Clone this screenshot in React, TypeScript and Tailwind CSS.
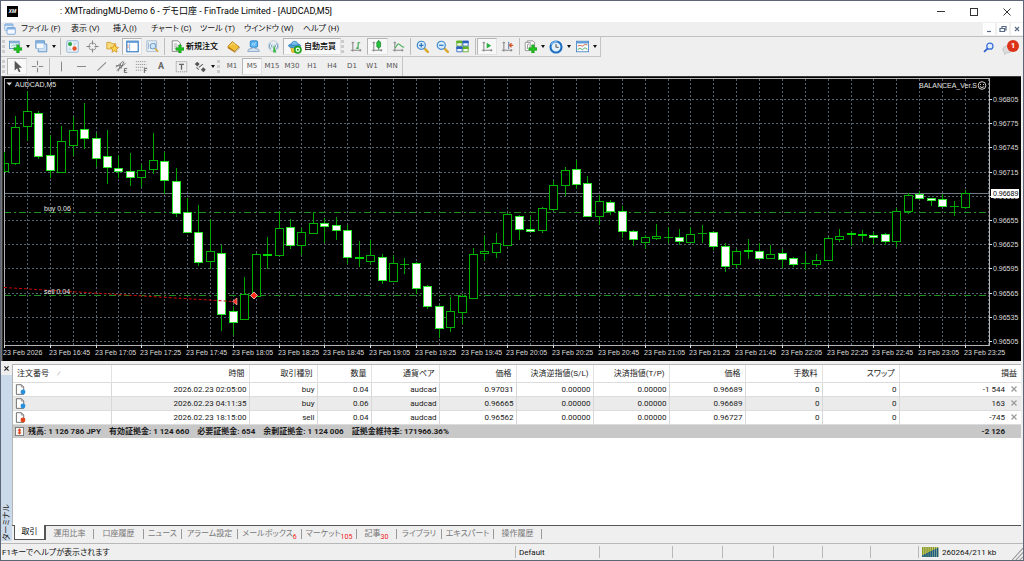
import { useState, type ReactNode } from "react";

const UI_FONT =
  "font-['Roboto','Noto_Sans_CJK_JP',sans-serif] [font-feature-settings:'palt']";

// [high, body top, body bottom, low, bearish]
type Candle = [number, number, number, number, 0 | 1];

const CANDLES: Candle[] = [
  [152, 163, 171, 171, 0], [116, 127, 163, 164, 0], [91, 111, 126, 140, 0],
  [111, 113, 156, 158, 1], [135, 155, 170, 177, 1], [126, 141, 172, 172, 0],
  [117, 130, 145, 155, 0], [103, 129, 138, 148, 1], [133, 138, 158, 166, 1],
  [130, 156, 167, 183, 1], [155, 168, 171, 177, 1], [153, 171, 177, 185, 1],
  [164, 170, 177, 186, 0], [133, 160, 169, 173, 0], [152, 161, 180, 193, 1],
  [168, 181, 213, 216, 1], [198, 212, 232, 232, 1], [205, 232, 262, 265, 1],
  [219, 251, 261, 268, 0], [245, 253, 314, 330, 1], [306, 311, 322, 334, 1],
  [277, 294, 319, 319, 0], [253, 254, 296, 296, 0], [237, 254, 255, 268, 1],
  [211, 228, 255, 255, 0], [219, 227, 245, 248, 1], [228, 232, 245, 254, 0],
  [212, 223, 233, 233, 0], [218, 223, 226, 242, 1], [217, 225, 230, 239, 1],
  [225, 230, 257, 263, 1], [241, 257, 258, 266, 1], [240, 255, 261, 264, 0],
  [254, 257, 280, 283, 1], [255, 263, 281, 281, 0], [258, 264, 264, 273, 0],
  [262, 263, 288, 293, 1], [285, 286, 306, 308, 1], [305, 306, 328, 337, 1],
  [297, 311, 327, 331, 0], [294, 296, 312, 323, 0], [248, 254, 298, 298, 0],
  [236, 251, 253, 260, 0], [233, 243, 252, 257, 0], [213, 214, 245, 245, 0],
  [215, 216, 229, 239, 1], [216, 229, 231, 231, 1], [207, 208, 230, 232, 0],
  [181, 185, 209, 210, 0], [167, 170, 185, 195, 0], [160, 169, 184, 188, 1],
  [176, 183, 216, 216, 1], [195, 201, 216, 224, 0], [200, 202, 211, 214, 1],
  [206, 211, 231, 237, 1], [230, 231, 239, 245, 1], [235, 237, 242, 248, 0],
  [224, 236, 238, 239, 0], [227, 237, 237, 242, 0], [229, 237, 241, 244, 1],
  [227, 234, 242, 242, 0], [225, 233, 233, 242, 0], [231, 232, 246, 249, 1],
  [243, 246, 266, 271, 1], [249, 251, 264, 267, 0], [239, 250, 251, 258, 1],
  [243, 251, 258, 259, 1], [245, 254, 258, 258, 0], [249, 253, 259, 267, 1],
  [257, 258, 264, 266, 1], [253, 263, 263, 269, 0], [254, 260, 264, 266, 0],
  [237, 238, 260, 260, 0], [229, 236, 239, 241, 0], [231, 233, 234, 245, 1],
  [230, 234, 235, 241, 1], [232, 235, 237, 243, 1], [233, 234, 241, 244, 1],
  [208, 211, 241, 246, 0], [193, 195, 211, 213, 0], [191, 194, 198, 199, 1],
  [198, 198, 200, 205, 1], [194, 199, 206, 206, 1], [201, 206, 206, 215, 0],
  [190, 193, 207, 208, 0],
];

const PRICES = [
  "0.96805", "0.96775", "0.96745", "0.96715", "0.96685", "0.96655",
  "0.96625", "0.96595", "0.96565", "0.96535", "0.96505",
];

const candleX = (i: number) => Math.round(4 + i * 11.44);
const priceY = (i: number) => Math.round(99 + i * 24.2);

function timeLabel(i: number) {
  if (i === 0) return "23 Feb 2026";
  const minutes = 16 * 60 + 45 + (i - 1) * 20;
  const hh = Math.floor(minutes / 60);
  const mm = String(minutes % 60).padStart(2, "0");
  return `23 Feb ${hh}:${mm}`;
}

function Chart() {
  return (
    <svg
      viewBox="1 76 1020 285"
      className="block h-auto w-full bg-black font-['Liberation_Sans',sans-serif] text-[7px]"
      role="img"
      aria-label="AUDCAD,M5"
    >
      <rect x="1" y="76" width="1020" height="1" fill="#3a3a3a" />
      <rect x="1" y="76" width="1" height="285" fill="#777" />
      <rect x="2" y="76" width="1" height="285" fill="#333" />

      <g stroke="#56646f" strokeDasharray="2 2" shapeRendering="crispEdges">
        {PRICES.map((p, i) => (
          <line key={p} x1="4" x2="989" y1={priceY(i) + 0.5} y2={priceY(i) + 0.5} />
        ))}
        {Array.from({ length: 43 }, (_, i) => (
          <line
            key={i}
            x1={candleX((i + 1) * 2) + 0.5}
            x2={candleX((i + 1) * 2) + 0.5}
            y1="79"
            y2="345"
          />
        ))}
      </g>

      <g shapeRendering="crispEdges">
        <path d="M4 193.5H989" stroke="#6b7a84" />
        <path d="M4 212.5H989M4 295.5H989" stroke="#1f8f1f" strokeDasharray="7 3 2 3" />
        <path d="M4.5 345V78.5H989.5V345.5H4" stroke="#b4b4b4" fill="none" />
      </g>

      <g shapeRendering="crispEdges">
        {CANDLES.map(([high, top, bottom, low, bear], i) => {
          const x = candleX(i);
          const left = i === 0 ? x : x - 4;
          const width = i === 0 ? 4 : 8;
          return (
            <g key={i}>
              <path d={`M${x + 0.5} ${high}V${low + 1}`} stroke="#00a400" />
              {bottom - top < 2 ? (
                <rect
                  x={left}
                  y={top}
                  width={width + 1}
                  height={bottom - top + 1}
                  fill={bear ? "#00d800" : "#00a400"}
                />
              ) : (
                <rect
                  x={left + 0.5}
                  y={top + 0.5}
                  width={width}
                  height={bottom - top}
                  fill={bear ? "#fff" : "#000"}
                  stroke={bear ? "#2be62b" : "#00b000"}
                />
              )}
            </g>
          );
        })}
      </g>

      <path d="M4 287.5L233 301.5" stroke="#c80000" strokeDasharray="3 2" />
      <path d="M237 298v7l-4.500-3.500z" fill="#ff2a1c" stroke="#f3c9c4" strokeWidth=".6" />
      <path d="M254 292l3.500 3.500-3.500 3.500-3.500-3.500z" fill="#ff2a1c" stroke="#f3c9c4" strokeWidth=".8" />

      <g fill="#e4e4e4">
        <path d="M6.500 82.500h5.500l-2.750 3z" />
        <text x="15" y="87">AUDCAD,M5</text>
        <text x="977" y="88" textAnchor="end">BALANCEA_Ver.S</text>
        <text x="44" y="211">buy 0.06</text>
        <text x="44" y="294">sell 0.04</text>
      </g>
      <g stroke="#e4e4e4" fill="none" strokeWidth=".9">
        <circle cx="982" cy="85.500" r="3.800" />
        <path d="M980.500 84v1M983.500 84v1M979.800 86.500q2.200 2.300 4.400 0" />
      </g>

      <g fill="#dcdcdc">
        {PRICES.map((p, i) => (
          <g key={p}>
            <rect x="989" y={priceY(i)} width="3" height="1" />
            <text x="993" y={priceY(i) + 3}>{p}</text>
          </g>
        ))}
        {Array.from({ length: 22 }, (_, i) => (
          <g key={i}>
            <rect x={candleX(i * 4)} y="345" width="1" height="3" />
            <text x={candleX(i * 4) - 1} y="355">{timeLabel(i)}</text>
          </g>
        ))}
      </g>
      <rect x="991" y="189" width="28" height="9" fill="#fff" />
      <text x="993" y="196" fill="#000">0.96689</text>
    </svg>
  );
}

function Icon({ children, size = "size-[13px]" }: { children: ReactNode; size?: string }) {
  return (
    <svg viewBox="0 0 16 16" className={`${size} shrink-0`} fill="none" aria-hidden="true">
      {children}
    </svg>
  );
}

const GreenPlus = ({ x = 6, y = 6 }: { x?: number; y?: number }) => (
  <path
    d={`M${x + 3.5} ${y}h3v3.500h3.500v3h-3.500v3.500h-3v-3.500h-3.500v-3h3.500z`}
    fill="#1fc41f"
    stroke="#0a8a10"
    strokeWidth=".7"
  />
);

const Axes = () => (
  <path d="M3.500 2v12M1 12.500h13M2 3.500h3M12.500 11v3" stroke="#888" strokeWidth="1.300" />
);

const icons = {
  newChart: (
    <Icon>
      <rect x=".5" y="1.500" width="12" height="9" fill="#e8f2fb" stroke="#4b86b8" />
      <path d="M1 3h11" stroke="#7fb0da" strokeWidth="2" />
      <path d="M3 8l2-2 2 1 3-2" stroke="#6c9" />
      <GreenPlus />
    </Icon>
  ),
  profiles: (
    <Icon>
      <rect x="1" y="1" width="10.500" height="9" fill="#e6f0fa" stroke="#4d86c0" />
      <path d="M1 2.500h10.500" stroke="#6fa4d8" strokeWidth="2" />
      <path d="M11.500 5h3v9.500H4V10" stroke="#4d86c0" fill="#cfe1f3" />
      <rect x="2" y="4" width="9" height="6.500" fill="#f4f8fc" stroke="#8fb6dc" strokeWidth=".6" />
    </Icon>
  ),
  market: (
    <Icon>
      <rect x="1" y="1" width="14" height="14" rx="1" fill="#f4f9fd" stroke="#7aa6cf" />
      <circle cx="5" cy="5" r="2.600" fill="#2ca84a" />
      <circle cx="10.500" cy="10.500" r="2.700" fill="#e8542a" />
      <path d="M9 4h4M9 6h3M3 10h3M3 12h4" stroke="#a9c4dd" />
    </Icon>
  ),
  dataWindow: (
    <Icon>
      <circle cx="8" cy="8" r="4.500" stroke="#999" strokeWidth="1.200" />
      <path d="M8 .5v5M8 10.500v5M.5 8h5M10.500 8h5" stroke="#888" strokeWidth="1.300" />
    </Icon>
  ),
  navigator: (
    <Icon>
      <path d="M1 3h5l1 1.500h5V11H1z" fill="#f8dc7a" stroke="#d29a28" />
      <path
        d="M10.500 5.500l1.600 3.200 3.400.5-2.500 2.400.6 3.500-3.100-1.700-3.100 1.700.6-3.500-2.500-2.400 3.400-.5z"
        fill="#fbd24a"
        stroke="#c98718"
        strokeWidth=".8"
      />
    </Icon>
  ),
  terminal: (
    <Icon>
      <rect x="1" y="1.500" width="14" height="13" fill="#fff" stroke="#2f78c0" strokeWidth="1.400" />
      <path d="M1 2.500h14" stroke="#5d9bd8" strokeWidth="2" />
      <path d="M4.500 4v10" stroke="#79abdf" />
      <path d="M2.500 6v5" stroke="#e05a2a" strokeDasharray="1.500 1" />
    </Icon>
  ),
  tester: (
    <Icon>
      <path d="M1 1h12v13H1z" fill="#eef3f8" stroke="#9ab4cd" />
      <path d="M3 3v8M5.500 5v6M11 3v4" stroke="#8aa9c6" />
      <circle cx="8.500" cy="7.500" r="3.500" fill="#cde5f7" stroke="#5b8fbe" />
      <path d="M11 10.500l4 4" stroke="#d0a33d" strokeWidth="2" />
    </Icon>
  ),
  newOrder: (
    <Icon>
      <path d="M1.500 1h7l3 3v10h-10z" fill="#fafafa" stroke="#777" />
      <path d="M3.500 5h4M3.500 7.500h5M3.500 10h2" stroke="#9a9a9a" />
      <GreenPlus />
    </Icon>
  ),
  metaEditor: (
    <Icon>
      <path d="M1 8l5.500-6L15 8.500 9.500 14z" fill="#f2c037" stroke="#b77d0e" />
      <path d="M1 8v2l8.500 5.500V14z" fill="#b9760a" />
      <path d="M9.500 15.500L15 10.500v-2L9.500 14z" fill="#e7e2d2" stroke="#9a7a30" strokeWidth=".6" />
      <path d="M4 7l3-3 3 2" stroke="#fbe59a" />
    </Icon>
  ),
  community: (
    <Icon>
      <rect x="4" y="1" width="9" height="8" rx="1.500" fill="#56b4f2" stroke="#1e7cc8" />
      <path d="M6 6.500l2-3M8.500 7l2-4" stroke="#d5efff" />
      <path d="M1 14c0-3 2-3.500 4-3 1-2 5-2 6 0 3-.5 4 1 4 3z" fill="#dbe6f3" stroke="#7895bd" />
    </Icon>
  ),
  signals: (
    <Icon>
      <circle cx="8" cy="7.500" r="6.500" fill="#e9eef2" stroke="#aebcc8" strokeWidth=".8" />
      <path d="M4.500 11a5 5 0 010-7M11.500 4a5 5 0 010 7" stroke="#6f9cc4" strokeWidth="1.300" />
      <path d="M6.300 9.200a2.600 2.600 0 010-3.500M9.700 5.700a2.600 2.600 0 010 3.500" stroke="#4f86b8" />
      <path d="M8 7l-.5 8.500h4L9 7z" fill="#3fb54a" />
    </Icon>
  ),
  autoTrade: (
    <Icon size="size-[14px]">
      <path d="M3 7h10l-1.500 7h-7z" fill="#f6cf3f" stroke="#c99a1a" />
      <ellipse cx="7.500" cy="6.500" rx="7" ry="2.400" fill="#4fa3dc" stroke="#2577b4" strokeWidth=".8" />
      <path d="M3.500 6C3.500 0 11.500 0 11.500 6z" fill="#79bfec" stroke="#2577b4" strokeWidth=".8" />
      <circle cx="11.200" cy="11.200" r="4.300" fill="#27b327" stroke="#0d7d12" strokeWidth=".6" />
      <circle cx="11.200" cy="11.200" r="1.900" stroke="#fff" strokeWidth="1.200" />
    </Icon>
  ),
  bars: (
    <Icon>
      <Axes />
      <path d="M10 3v8M10 3.500h2.500M7.500 10H10" stroke="#2fa046" strokeWidth="1.300" />
    </Icon>
  ),
  candles: (
    <Icon>
      <Axes />
      <path d="M9.500 0v12" stroke="#168a2a" strokeWidth="1.200" />
      <rect x="7.200" y="2" width="4.600" height="7" rx="1" fill="#2bc43f" stroke="#168a2a" />
    </Icon>
  ),
  lineChart: (
    <Icon>
      <Axes />
      <path d="M4 10c3-6 4-6 6-4s3 3 5 3" stroke="#3faa4e" strokeWidth="1.300" />
    </Icon>
  ),
  zoomIn: (
    <Icon>
      <path d="M10 10l4.500 4.500" stroke="#d9a92f" strokeWidth="3" strokeLinecap="round" />
      <circle cx="6.500" cy="6.500" r="5" fill="#d9edfb" stroke="#3f87cc" strokeWidth="1.400" />
      <path d="M3.800 6.500h5.400M6.500 3.800v5.400" stroke="#2f73b8" strokeWidth="1.500" />
    </Icon>
  ),
  zoomOut: (
    <Icon>
      <path d="M10 10l4.500 4.500" stroke="#d9a92f" strokeWidth="3" strokeLinecap="round" />
      <circle cx="6.500" cy="6.500" r="5" fill="#d9edfb" stroke="#3f87cc" strokeWidth="1.400" />
      <path d="M3.800 6.500h5.400" stroke="#2f73b8" strokeWidth="1.500" />
    </Icon>
  ),
  tile: (
    <Icon>
      <path d="M1 1.500h6.500v6H1zM8.500 8.500H15v6H8.500z" fill="#f2f8ee" stroke="#58a51e" />
      <path d="M8.500 1.500H15v6H8.500zM1 8.500h6.500v6H1z" fill="#eef4fb" stroke="#2a5fc0" />
      <path d="M.5 2.500H8M8 9.500h7.500" stroke="#62b321" strokeWidth="3" />
      <path d="M8 2.500h7.500M.5 9.500H8" stroke="#2a5fc0" strokeWidth="3" />
    </Icon>
  ),
  autoScroll: (
    <Icon>
      <Axes />
      <path d="M7 3.500v7l5.500-3.500z" fill="#2cae43" />
    </Icon>
  ),
  chartShift: (
    <Icon>
      <Axes />
      <path d="M9.500 2v9" stroke="#5b7fa8" strokeWidth="1.300" />
      <path d="M15 6.500h-4M13 4l-2.500 2.500L13 9" stroke="#d2522c" strokeWidth="1.500" />
    </Icon>
  ),
  indicators: (
    <Icon>
      <path d="M4 1h7l2 2v9H4z" fill="#f5f5f5" stroke="#8a8a8a" />
      <path d="M1.500 3h6v10h-6z" fill="#fff" stroke="#8a8a8a" />
      <path d="M6 5c-2-1-1.500 3-2 6" stroke="#666" />
      <GreenPlus />
    </Icon>
  ),
  periods: (
    <Icon size="size-[14px]">
      <circle cx="8" cy="8" r="6.300" fill="#e4f1fb" stroke="#1d6fc2" strokeWidth="2.400" />
      <path d="M8 4.500V8l3 .5" stroke="#555" strokeWidth="1.200" />
      <path d="M2.500 5.500a6 6 0 017-3.500" stroke="#7ec0f4" strokeWidth="1.200" />
    </Icon>
  ),
  templates: (
    <Icon>
      <rect x=".5" y="1.500" width="15" height="13" fill="#f7fbff" stroke="#3d7fc0" />
      <path d="M1 3h14" stroke="#5b9bd8" strokeWidth="2.500" />
      <path d="M2 7.500l3-1 3 1 3-2 3 .5" stroke="#c9552e" />
      <path d="M2 12l3-2 3 2 3-2.500 3 2" stroke="#3ca34d" />
    </Icon>
  ),
  cursor: (
    <Icon>
      <path d="M4.500 1v12l3-2.800 2.200 4.800 2-1-2.200-4.600h4z" fill="#555" />
    </Icon>
  ),
  crosshair: (
    <Icon>
      <path d="M8 1v5.500M8 9.500V15M1 8h5.500M9.500 8H15" stroke="#888" strokeWidth="1.300" />
    </Icon>
  ),
  vline: <Icon><path d="M8 2v12" stroke="#888" strokeWidth="1.300" /></Icon>,
  hline: <Icon><path d="M2.500 8h11" stroke="#888" strokeWidth="1.300" /></Icon>,
  trend: <Icon><path d="M3 13L13.500 3" stroke="#888" strokeWidth="1.300" /></Icon>,
  channel: (
    <Icon>
      <path d="M1 9l9-7.500M2 13L13 4M4 14l3-9M7 11l4-9M1 7h8" stroke="#666" />
      <path d="M15 10.500h-3.500v5H15M11.500 13H14" stroke="#555" />
    </Icon>
  ),
  fibo: (
    <Icon>
      <path d="M1 2h13M1 5.500h13M1 9h13M1 12.500h8" stroke="#888" strokeDasharray="1.500 1" />
      <path d="M15 10.500h-3.500V16M11.500 13H14" stroke="#555" />
    </Icon>
  ),
  label: (
    <Icon>
      <rect x="1.500" y="2" width="13" height="12.500" stroke="#888" strokeDasharray="1.500 1" />
      <path d="M5 5.500h6M8 5.500V12" stroke="#666" strokeWidth="1.600" />
    </Icon>
  ),
  arrows: (
    <Icon>
      <path d="M4 2l3 3-3 3-3-3zM11.500 9l3 3-3 3-3-3z" fill="#555" />
      <path d="M3 9l3 3M6 9l5-4" stroke="#666" strokeWidth="1.300" />
    </Icon>
  ),
};

function Caret() {
  return (
    <svg viewBox="0 0 4 3" className="h-[3px] w-1 shrink-0" aria-hidden="true">
      <path d="M0 0h4L2 3z" fill="#111" />
    </svg>
  );
}

const Grip = () => (
  <span className="my-[3px] w-[5px] shrink-0 self-stretch border-l-[3px] border-dotted border-[#cccccc]" />
);

const Sep = () => (
  <span className="my-px flex w-1 shrink-0 justify-center self-stretch">
    <span className="w-px bg-[#bdbdbd]" />
  </span>
);

type ToolProps = {
  label: string;
  width?: string;
  pressed?: boolean;
  caret?: boolean;
  children: ReactNode;
};

function Tool({ label, width = "w-5", pressed, caret, children }: ToolProps) {
  return (
    <button
      type="button"
      aria-label={label}
      aria-pressed={pressed}
      className={`flex h-[17px] shrink-0 items-center justify-center ${caret ? "gap-1" : "gap-0.5"} ${width} ${
        pressed ? "border border-[#e2e2e2] border-t-[#b5b5b5] border-l-[#b5b5b5] bg-[#f8f8f8]" : ""
      }`}
    >
      {children}
      {caret && <Caret />}
    </button>
  );
}

const MENUS = [
  { label: "ファイル (F)", width: "w-[50px]" },
  { label: "表示 (V)", width: "w-[42px]" },
  { label: "挿入(I)", width: "w-[38px]" },
  { label: "チャート (C)", width: "w-[49px]" },
  { label: "ツール (T)", width: "w-[44px]" },
  { label: "ウインドウ (W)", width: "w-[59px]" },
  { label: "ヘルプ (H)", width: "w-[44px]" },
];

const TIMEFRAMES = ["M1", "M5", "M15", "M30", "H1", "H4", "D1", "W1", "MN"];

const COLUMNS = [
  { label: "注文番号", width: "w-[98px]" },
  { label: "時間", width: "w-[138px]" },
  { label: "取引種別", width: "w-[68px]" },
  { label: "数量", width: "w-[54px]" },
  { label: "通貨ペア", width: "w-[68px]" },
  { label: "価格", width: "w-[77px]" },
  { label: "決済逆指値(S/L)", width: "w-[77px]" },
  { label: "決済指値(T/P)", width: "w-[76px]" },
  { label: "価格", width: "w-[76px]" },
  { label: "手数料", width: "w-[77px]" },
  { label: "スワップ", width: "w-[77px]" },
  { label: "損益", width: "" },
];

const ORDERS = [
  { cells: ["2026.02.23 02:05:00", "buy", "0.04", "audcad", "0.97031", "0.00000", "0.00000", "0.96689", "0", "0"], profit: "-1 544" },
  { cells: ["2026.02.23 04:11:35", "buy", "0.06", "audcad", "0.96665", "0.00000", "0.00000", "0.96689", "0", "0"], profit: "163" },
  { cells: ["2026.02.23 18:15:00", "sell", "0.04", "audcad", "0.96562", "0.00000", "0.00000", "0.96727", "0", "0"], profit: "-745" },
];

const TABS = [
  { label: "取引", width: "w-8" },
  { label: "運用比率", width: "w-[48px]" },
  { label: "口座履歴", width: "w-[50px]" },
  { label: "ニュース", width: "w-[38px]" },
  { label: "アラーム設定", width: "w-[56px]" },
  { label: "メールボックス", width: "w-[64px]", count: 6 },
  { label: "マーケット", width: "w-[55px]", count: 105 },
  { label: "記事", width: "w-[40px]", count: 30 },
  { label: "ライブラリ", width: "w-[45px]" },
  { label: "エキスパート", width: "w-[52px]" },
  { label: "操作履歴", width: "w-[48px]" },
];

function TitleBar() {
  return (
    <header className="flex h-[21px] items-center bg-white text-[9px] text-black">
      <span className="ml-1.5 flex h-[11px] w-[11px] items-center justify-center bg-black text-[5px] font-bold text-white italic">
        XM
      </span>
      <h1 className="ml-[42px] flex-1 whitespace-nowrap">
        : XMTradingMU-Demo 6 - デモ口座 - FinTrade Limited - [AUDCAD,M5]
      </h1>
      <button type="button" aria-label="最小化" className="flex w-[33px] justify-center">
        <span className="h-px w-2 bg-[#333]" />
      </button>
      <button type="button" aria-label="最大化" className="flex w-[33px] justify-center">
        <span className="size-2 border border-[#333]" />
      </button>
      <button type="button" aria-label="閉じる" className="flex w-[33px] justify-center">
        <svg viewBox="0 0 8 8" className="size-2" aria-hidden="true">
          <path d="M.5.5l7 7M7.500.5l-7 7" stroke="#333" />
        </svg>
      </button>
    </header>
  );
}

function MenuBar() {
  const mdi = [
    { label: "ウインドウを最小化", d: "M2 6.500h4" },
    { label: "元に戻す", d: "M3 3V1.500h4V5H5.500M1 3.500h4.500v3H1z" },
    { label: "ウインドウを閉じる", d: "M2 2l4 4M6 2L2 6" },
  ];
  return (
    <nav className="flex h-[15px] items-center border-b border-[#c0c0c0] text-[8px] text-[#111]">
      <svg viewBox="0 0 16 16" className="ml-[3px] mr-[5px] size-[12px]" fill="none" aria-hidden="true">
        <rect x="1" y="1" width="11" height="9" rx="1" fill="#e5f0fb" stroke="#7ba6da" />
        <rect x="4" y="6" width="11" height="9" rx="1" fill="#f4f9ff" stroke="#5c90d0" />
        <path d="M4 7.500h11M1 2.500h11" stroke="#7fb0e6" strokeWidth="2" />
      </svg>
      {MENUS.map((m) => (
        <button key={m.label} type="button" className={`${m.width} shrink-0 text-left whitespace-nowrap`}>
          {m.label}
        </button>
      ))}
      <div className="ml-auto flex gap-0.5">
        {mdi.map((b) => (
          <button key={b.label} type="button" aria-label={b.label} className="flex size-3 items-center justify-center bg-white">
            <svg viewBox="0 0 8 8" className="size-2" fill="none" aria-hidden="true">
              <path d={b.d} stroke="#566a85" strokeWidth="1.200" />
            </svg>
          </button>
        ))}
      </div>
    </nav>
  );
}

function MainToolbar() {
  return (
    <div className="flex h-5 items-center text-[8px]">
      <div className="flex h-full items-center border-r border-b border-[#c4c4c4] pl-px">
        <Grip />
        <Tool label="新規チャート" width="w-[25px]" caret>{icons.newChart}</Tool>
        <Tool label="組表示" width="w-[26px]" caret>{icons.profiles}</Tool>
        <Sep />
        <Tool label="気配値表示">{icons.market}</Tool>
        <Tool label="データウインドウ">{icons.dataWindow}</Tool>
        <Tool label="ナビゲーター">{icons.navigator}</Tool>
        <Tool label="ターミナル" pressed>{icons.terminal}</Tool>
        <Tool label="ストラテジーテスター">{icons.tester}</Tool>
        <Sep />
        <Tool label="新規注文" width="w-[57px]">
          {icons.newOrder}
          <span className="font-medium whitespace-nowrap">新規注文</span>
        </Tool>
        <Tool label="メタエディター">{icons.metaEditor}</Tool>
        <Tool label="MQL5コミュニティ">{icons.community}</Tool>
        <Tool label="シグナル">{icons.signals}</Tool>
        <Tool label="自動売買" width="w-[58px]" pressed>
          {icons.autoTrade}
          <span className="font-medium whitespace-nowrap">自動売買</span>
        </Tool>
        <Grip />
        <Tool label="バーチャート" width="w-[21px]">{icons.bars}</Tool>
        <Tool label="ローソク足" width="w-[21px]" pressed>{icons.candles}</Tool>
        <Tool label="ラインチャート">{icons.lineChart}</Tool>
        <Sep />
        <Tool label="拡大">{icons.zoomIn}</Tool>
        <Tool label="縮小">{icons.zoomOut}</Tool>
        <Tool label="整列" width="w-[21px]">{icons.tile}</Tool>
        <Sep />
        <Tool label="自動スクロール" pressed>{icons.autoScroll}</Tool>
        <Tool label="チャートシフト">{icons.chartShift}</Tool>
        <Sep />
        <Tool label="インディケータ" width="w-[26px]" caret>{icons.indicators}</Tool>
        <Tool label="時間足" width="w-[26px]" caret>{icons.periods}</Tool>
        <Tool label="定型チャート" width="w-[27px]" caret>{icons.templates}</Tool>
      </div>
      <div className="ml-auto flex items-center pr-1">
        <button type="button" aria-label="検索" className="mr-2">
          <svg viewBox="0 0 16 16" className="block size-[11px]" fill="none" aria-hidden="true">
            <circle cx="10" cy="6" r="4.500" fill="#e3eefc" stroke="#3a6fd8" strokeWidth="1.800" />
            <path d="M6.500 9.500L1.500 14.500" stroke="#2b5fd0" strokeWidth="2.600" />
          </svg>
        </button>
        <button type="button" aria-label="通知 1" className="relative h-[15px] w-[17px]">
          <svg viewBox="0 0 12 12" className="absolute bottom-0 left-0 size-[11px]" aria-hidden="true">
            <path d="M1 6a5 4 0 1110 0 5 4 0 01-6 3.500L3 11.500V9.500A4 4 0 011 6z" fill="#dcdcdc" stroke="#b5b5b5" strokeWidth=".8" />
          </svg>
          <span className="absolute top-0 right-0 flex size-3 items-center justify-center rounded-full bg-[#dc3219] text-[8px] leading-none font-bold text-white">
            1
          </span>
        </button>
      </div>
    </div>
  );
}

function DrawingToolbar() {
  const [frame, setFrame] = useState("M5");

  return (
    <div className="flex h-[19px] items-center">
      <div className="flex h-full items-center border-r border-[#c4c4c4] pl-px">
        <Grip />
        <Tool label="カーソル" pressed>{icons.cursor}</Tool>
        <Tool label="クロスヘア">{icons.crosshair}</Tool>
        <Sep />
        <Tool label="垂直線">{icons.vline}</Tool>
        <Tool label="水平線">{icons.hline}</Tool>
        <Tool label="トレンドライン">{icons.trend}</Tool>
        <Tool label="チャネル">{icons.channel}</Tool>
        <Tool label="フィボナッチ">{icons.fibo}</Tool>
        <Tool label="テキスト">
          <span className="text-[9px] leading-none font-bold text-[#666]">A</span>
        </Tool>
        <Tool label="テキストラベル">{icons.label}</Tool>
        <Tool label="矢印" width="w-[26px]" caret>{icons.arrows}</Tool>
        <Grip />
        {TIMEFRAMES.map((t) => (
          <button
            key={t}
            type="button"
            aria-pressed={t === frame}
            onClick={() => setFrame(t)}
            className={`flex h-[17px] w-5 items-center justify-center font-['DejaVu_Sans',sans-serif] text-[7px] text-[#555] ${
              t === frame ? "border border-[#e2e2e2] border-t-[#b5b5b5] border-l-[#b5b5b5] bg-[#f8f8f8]" : ""
            }`}
          >
            {t}
          </button>
        ))}
      </div>
    </div>
  );
}

function OrderIcon({ sell }: { sell: boolean }) {
  return (
    <svg viewBox="0 0 12 12" className="ml-0.5 block size-[11px]" aria-hidden="true">
      <path d="M1.500.8h5.500l2.500 2.500v8h-8z" fill="#fff" stroke="#555" strokeWidth=".9" />
      <path d="M7 .8v2.500h2.500" fill="none" stroke="#777" strokeWidth=".8" />
      <circle cx="8.700" cy="8.700" r="2.700" fill={sell ? "#e0451c" : "#2a90dc"} />
    </svg>
  );
}

function OrdersTable() {
  const cell = "border-r border-[#d8d8d8] pr-[2px]";
  return (
    <table className="w-full table-fixed border-collapse text-right text-[8px] leading-[13px] whitespace-nowrap text-[#1a1a1a]">
      <thead>
        <tr className="h-[17px] border-b border-[#dcdcdc]">
          {COLUMNS.map((c, i) => (
            <th
              key={i}
              className={`${c.width} font-normal ${
                i === 0 ? "border-r border-[#e2e2e2] pl-1 text-left" : i === 11 ? "pr-1" : "border-r border-[#e2e2e2] pr-1"
              }`}
            >
              {c.label}
              {i === 0 && <span className="ml-2 text-[#999]">⁄</span>}
            </th>
          ))}
        </tr>
      </thead>
      <tbody>
        {ORDERS.map((o) => (
          <tr key={o.cells[0]} className="h-[14px] border-b border-[#dcdcdc] even:bg-[#ebebeb]">
            <td className={cell}>
              <OrderIcon sell={o.cells[1] === "sell"} />
            </td>
            {o.cells.map((c, i) => (
              <td key={i} className={cell}>{c}</td>
            ))}
            <td className="pr-1">
              {o.profit}
              <button type="button" aria-label="決済" className="ml-1.5 align-middle">
                <svg viewBox="0 0 6 6" className="block size-1.5" aria-hidden="true">
                  <path d="M.5.5l5 5M5.500.5l-5 5" stroke="#999" strokeWidth="1.200" />
                </svg>
              </button>
            </td>
          </tr>
        ))}
      </tbody>
      <tfoot>
        <tr className="h-[14px] bg-[#c8c8c8] font-bold">
          <td colSpan={11} className="text-left">
            <div className="flex items-center gap-2 pl-0.5">
              <svg viewBox="0 0 10 10" className="-mr-1 size-[9px]" aria-hidden="true">
                <rect x=".5" y=".5" width="9" height="9" fill="#f6f6f6" stroke="#777" />
                <path d="M5 1.500L7.200 4H6v2h1.200L5 8.500 2.800 6H4V4H2.800z" fill="#e0451c" />
              </svg>
              <span>残高: 1 126 786 JPY</span>
              <span>有効証拠金: 1 124 660</span>
              <span>必要証拠金: 654</span>
              <span>余剰証拠金: 1 124 006</span>
              <span>証拠金維持率: 171966.36%</span>
            </div>
          </td>
          <td className="pr-4">-2 126</td>
        </tr>
      </tfoot>
    </table>
  );
}

function Terminal() {
  const [tab, setTab] = useState("取引");

  return (
    <section className="flex flex-1 pr-0.5">
      <aside className="mb-0.5 flex w-[11px] flex-col items-center justify-between bg-[#cbdaea]">
        <button type="button" aria-label="ターミナルを閉じる" className="flex h-3.5 w-full items-center justify-center bg-[#efefef]">
          <svg viewBox="0 0 6 6" className="size-[5px]" aria-hidden="true">
            <path d="M.5.5l5 5M5.500.5l-5 5" stroke="#222" strokeWidth="1.400" />
          </svg>
        </button>
        <span className="rotate-180 text-[8px] leading-[11px] text-[#222] [text-orientation:sideways] [writing-mode:vertical-rl]">
          ターミナル
        </span>
      </aside>
      <div className="flex min-w-0 flex-1 flex-col pt-[3px]">
        <div className="flex-1 border-t border-l border-[#b4b4b4] bg-white">
          <OrdersTable />
        </div>
        <div role="tablist" className="flex h-[18px] items-start border-t border-[#555] pl-0.5 text-[8px]">
          {TABS.map((t) => (
            <button
              key={t.label}
              type="button"
              role="tab"
              aria-selected={t.label === tab}
              onClick={() => setTab(t.label)}
              className={`${t.width} flex shrink-0 items-center justify-center whitespace-nowrap ${
                t.label === tab
                  ? "-mt-px h-[15px] border-r-2 border-b border-l border-[#555] bg-white text-black"
                  : "mt-[3px] h-[10px] border-r border-[#999] text-[#777]"
              }`}
            >
              {t.label}
              {t.count && <span className="mt-1.5 text-[7px] text-[#f02020]">{t.count}</span>}
            </button>
          ))}
        </div>
      </div>
    </section>
  );
}

function StatusBar() {
  return (
    <footer className="flex h-[17px] items-stretch border-t border-[#b8b8b8] py-0.5 text-[8px] leading-[13px] whitespace-nowrap text-[#111]">
      <span className="flex-1 pl-px">F1キーでヘルプが表示されます</span>
      <span className="w-[84px] border-l border-[#b8b8b8] pl-[3px]">Default</span>
      <span className="w-[73px] border-l border-[#b8b8b8]" />
      <span className="w-[50px] border-l border-[#b8b8b8]" />
      <span className="w-[51px] border-l border-[#b8b8b8]" />
      <span className="w-[49px] border-l border-[#b8b8b8]" />
      <span className="w-[48px] border-l border-[#b8b8b8]" />
      <span className="w-[48px] border-l border-[#b8b8b8]" />
      <span className="flex w-[94px] items-center gap-[3px] border-l border-[#b8b8b8] pl-[3px]">
        <svg viewBox="0 0 17 12" className="h-3 w-[17px]" aria-hidden="true">
          {Array.from({ length: 8 }, (_, i) => (
            <g key={i}>
              <rect x={i * 2.1} y="1" width="1.600" height="10" fill="#8a9a1c" />
              <rect x={i * 2.1} y={9 - i} width="1.600" height={2 + i} fill="#1d5c86" />
            </g>
          ))}
        </svg>
        260264/211 kb
      </span>
      <svg viewBox="0 0 10 12" className="-mb-0.5 w-[11px] self-end" aria-hidden="true">
        <path d="M0 12L10 1M3.500 12L10 5M7 12l3-3" stroke="#999" />
      </svg>
    </footer>
  );
}

export default function App() {
  return (
    <main className={`${UI_FONT} flex min-h-screen flex-col border border-[#5c6674] bg-[#efefef]`}>
      <TitleBar />
      <MenuBar />
      <MainToolbar />
      <DrawingToolbar />
      <div className="pr-0.5">
        <Chart />
      </div>
      <Terminal />
      <StatusBar />
    </main>
  );
}
